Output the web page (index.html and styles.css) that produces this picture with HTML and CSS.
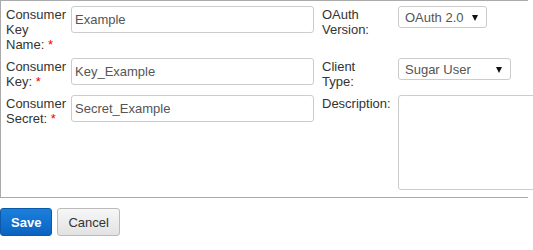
FILE: index.html
```html
<!DOCTYPE html>
<html lang="en">
<head>
  <meta charset="UTF-8" />
  <title>OAuth Keys</title>
  <link rel="stylesheet" href="styles.css">
</head>
<body>
  <form class="edit-panel">
    <div class="edit-grid">
      <label class="field-label" for="keyName">Consumer Key Name: <span class="required">*</span></label>
      <div class="field"><input type="text" id="keyName" value="Example"></div>
      <label class="field-label" for="oauthVersion">OAuth Version:</label>
      <div class="field">
        <span class="select-wrap version">
          <select id="oauthVersion">
            <option>OAuth 2.0</option>
            <option>OAuth 1.0</option>
          </select>
        </span>
      </div>

      <label class="field-label" for="consumerKey">Consumer Key: <span class="required">*</span></label>
      <div class="field"><input type="text" id="consumerKey" value="Key_Example"></div>
      <label class="field-label" for="clientType">Client Type:</label>
      <div class="field">
        <span class="select-wrap client">
          <select id="clientType">
            <option>Sugar User</option>
            <option>Support Portal</option>
          </select>
        </span>
      </div>

      <label class="field-label" for="consumerSecret">Consumer Secret: <span class="required">*</span></label>
      <div class="field"><input type="text" id="consumerSecret" value="Secret_Example"></div>
      <label class="field-label nowrap" for="description">Description:</label>
      <div class="field"><textarea id="description"></textarea></div>
    </div>
  </form>

  <div class="actions">
    <button type="button" class="btn btn-primary">Save</button>
    <button type="button" class="btn">Cancel</button>
  </div>
</body>
</html>
```

FILE: styles.css
```css
html {
  overflow: hidden;
}
body {
  margin: 0;
  font-family: Arial, 'Liberation Sans', sans-serif;
  font-size: 13px;
  color: #333;
  background: #fff;
}
.edit-panel {
  width: 528px;
  box-sizing: border-box;
  border: 1px solid #aaa;
  border-right: none;
  padding: 5px 0 7px 5px;
}
.edit-grid {
  display: grid;
  grid-template-columns: 65px 251px 76px 1fr;
  row-gap: 6px;
  align-items: start;
}
.field-label {
  display: block;
  line-height: 15px;
  padding-top: 1px;
  padding-right: 12px;
}
.field-label.nowrap {
  white-space: nowrap;
  padding-right: 0;
}
.required {
  color: #e00;
}
.field input,
.field select,
.field textarea {
  font-family: Arial, 'Liberation Sans', sans-serif;
  font-size: 13px;
  color: #555;
  border: 1px solid #ccc;
  border-radius: 3px;
  box-sizing: border-box;
  background: #fff;
  outline: none;
}
.field input {
  width: 243px;
  height: 27px;
  padding: 0 3px;
}
.select-wrap {
  position: relative;
  display: inline-block;
}
.select-wrap::after {
  content: "";
  position: absolute;
  right: 9px;
  top: 9px;
  border-left: 3px solid transparent;
  border-right: 3px solid transparent;
  border-top: 6px solid #111;
  pointer-events: none;
}
.field select {
  appearance: none;
  -webkit-appearance: none;
  height: 22px;
  padding: 0 6px;
  display: block;
}
.version select {
  width: 89px;
}
.client select {
  width: 113px;
}
.field textarea {
  display: block;
  width: 140px;
  height: 95px;
  resize: none;
}
.actions {
  display: flex;
  gap: 5px;
  margin-top: 10px;
}
.btn {
  font-family: Arial, 'Liberation Sans', sans-serif;
  font-size: 13px;
  height: 28px;
  padding: 0 10px;
  border: 1px solid #bbb;
  border-radius: 3px;
  background: linear-gradient(#f7f7f7, #e2e2e2);
  color: #333;
  cursor: pointer;
}
.btn-primary {
  font-weight: bold;
  color: #fff;
  border-color: #0b5aa8;
  background: linear-gradient(#1c7fdc, #0b63c1);
}
```
